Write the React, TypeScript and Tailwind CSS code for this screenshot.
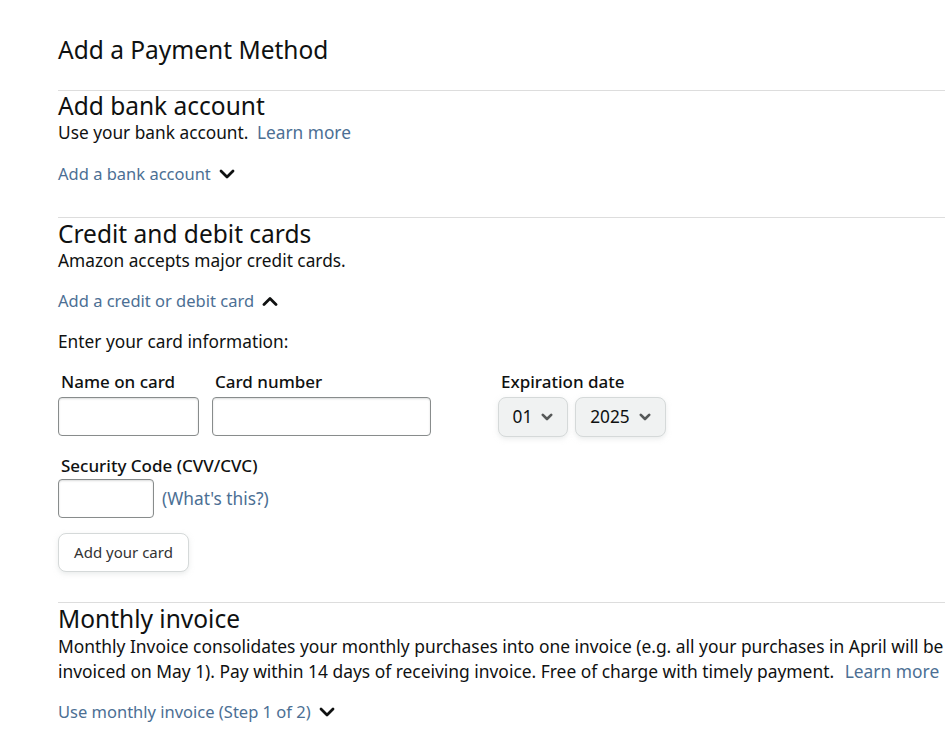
const font = { fontFamily: '"Noto Sans", "Open Sans", Arial, sans-serif' };

function Chevron({ up = false }: { up?: boolean }) {
  return (
    <svg width="16" height="10" viewBox="0 0 16 10" className="ml-2 inline-block" aria-hidden>
      <path
        d={up ? "M2 8.5 L8 2.5 L14 8.5" : "M2 2 L8 8 L14 2"}
        fill="none"
        stroke="#0f1111"
        strokeWidth="2.8"
        strokeLinecap="round"
        strokeLinejoin="round"
      />
    </svg>
  );
}

function SmallChevron() {
  return (
    <svg width="12" height="8" viewBox="0 0 12 8" className="ml-[9px]" aria-hidden>
      <path d="M1.8 1.8 L6 6 L10.2 1.8" fill="none" stroke="#565959" strokeWidth="2.6" strokeLinecap="round" strokeLinejoin="round" />
    </svg>
  );
}

function Toggle({ label, up }: { label: string; up?: boolean }) {
  return (
    <div className="flex items-center text-[16.5px] text-[#4c6f94] leading-6">
      <span>{label}</span>
      <Chevron up={up} />
    </div>
  );
}

function Section({ children, className = "" }: { children: React.ReactNode; className?: string }) {
  return <section className={`border-t border-[#dddddd] ${className}`}>{children}</section>;
}

function Field({ label, className }: { label: string; className: string }) {
  return (
    <div className="flex flex-col">
      <label className="pl-[3px] text-[17px] font-medium leading-6 text-[#0f1111]">{label}</label>
      <input
        className={`mt-[3px] h-[39px] rounded-[4px] border border-[#888c8c] bg-white shadow-[inset_0_1px_2px_rgba(15,17,17,0.15)] ${className}`}
      />
    </div>
  );
}

function Select({ value, width }: { value: string; width: string }) {
  return (
    <div
      className={`flex h-[40px] items-center justify-center rounded-[8px] border border-[#d5d9d9] bg-[#f0f2f2] text-[17.3px] text-[#0f1111] shadow-[0_2px_5px_rgba(213,217,217,0.5)] ${width}`}
    >
      <span>{value}</span>
      <SmallChevron />
    </div>
  );
}

export default function App() {
  return (
    <div className="min-h-screen bg-white pl-[58px] text-[#0f1111]" style={font}>
      <h1 className="pt-[34px] pb-[24px] text-[24.5px] leading-8 font-normal">Add a Payment Method</h1>

      {/* Bank account */}
      <Section className="pb-[31px]">
        <h2 className="text-[24.5px] leading-[30px]">Add bank account</h2>
        <p className="text-[17.3px] leading-6">
          Use your bank account. <a className="ml-1 text-[#4c6f94]">Learn more</a>
        </p>
        <div className="mt-[17px]">
          <Toggle label="Add a bank account" />
        </div>
      </Section>

      {/* Cards */}
      <Section className="pt-[1px] pb-[30px]">
        <h2 className="text-[24.5px] leading-[30px]">Credit and debit cards</h2>
        <p className="text-[17.3px] leading-6">Amazon accepts major credit cards.</p>
        <div className="mt-[16px]">
          <Toggle label="Add a credit or debit card" up />
        </div>
        <p className="mt-[17px] text-[17.3px] leading-6">Enter your card information:</p>

        <div className="mt-[16px] flex items-start">
          <Field label="Name on card" className="w-[141px]" />
          <div className="ml-[13px]">
            <Field label="Card number" className="w-[219px]" />
          </div>
          <div className="ml-[67px] flex flex-col">
            <span className="pl-[3px] text-[17px] font-medium leading-6">Expiration date</span>
            <div className="mt-[3px] flex gap-[7px]">
              <Select value="01" width="w-[70px]" />
              <Select value="2025" width="w-[91px]" />
            </div>
          </div>
        </div>

        <div className="mt-[17px] flex flex-col">
          <label className="pl-[3px] text-[17px] font-medium leading-6">Security Code (CVV/CVC)</label>
          <div className="mt-[1px] flex items-center">
            <input className="h-[39px] w-[96px] rounded-[4px] border border-[#888c8c] bg-white shadow-[inset_0_1px_2px_rgba(15,17,17,0.15)]" />
            <a className="ml-[8px] text-[17.3px] text-[#4c6f94]">(What's this?)</a>
          </div>
        </div>

        <button className="mt-[15px] h-[39px] w-[131px] rounded-[8px] border border-[#d5d9d9] bg-white text-[15px] text-[#333333] shadow-[0_2px_5px_rgba(213,217,217,0.5)]">
          Add your card
        </button>
      </Section>

      {/* Monthly invoice */}
      <Section className="pt-[1px] pb-[20px]">
        <h2 className="text-[24.5px] leading-[30px]">Monthly invoice</h2>
        <p className="text-[17.4px] leading-[25px] whitespace-nowrap">
          Monthly Invoice consolidates your monthly purchases into one invoice (e.g. all your purchases in April will be
          <br />
          invoiced on May 1). Pay within 14 days of receiving invoice. Free of charge with timely payment.{" "}
          <a className="ml-[6px] text-[#4c6f94]">Learn more</a>
        </p>
        <div className="mt-[16px]">
          <Toggle label="Use monthly invoice (Step 1 of 2)" />
        </div>
      </Section>
    </div>
  );
}
